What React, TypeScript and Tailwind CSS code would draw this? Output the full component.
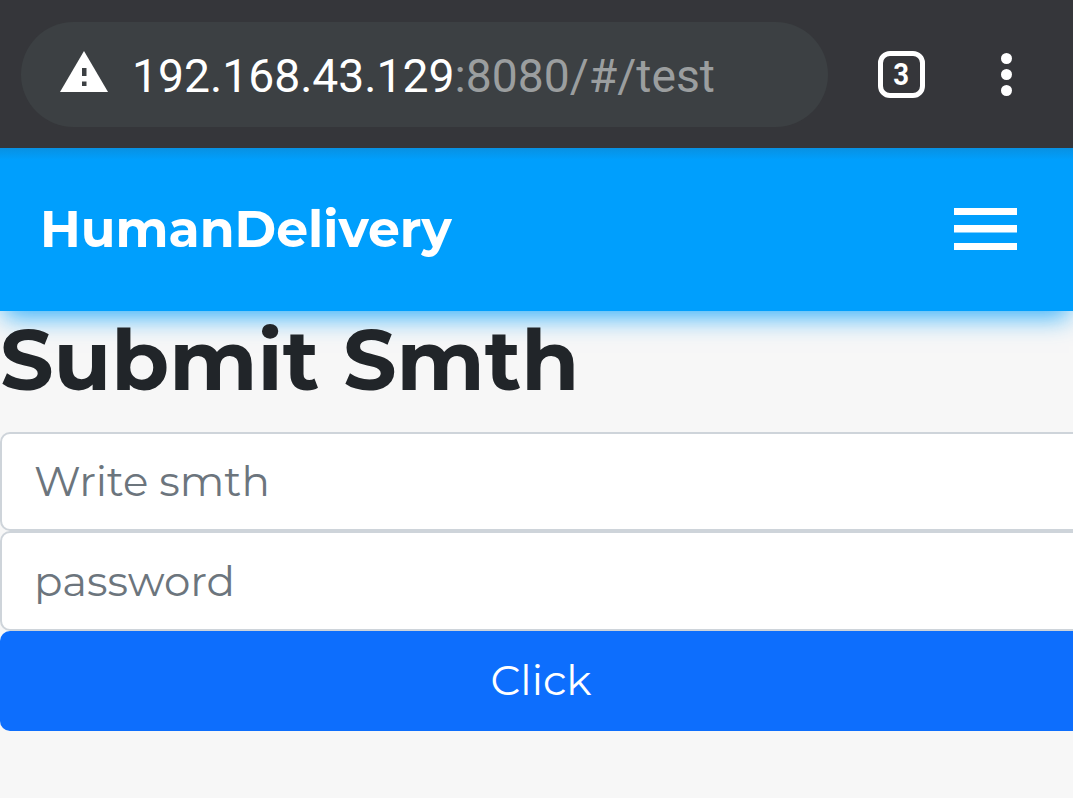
import React from 'react';

const fields = [
  { placeholder: "Write smth", type: "text", size: "h-[99px] pb-[2px]" },
  { placeholder: "password", type: "password", size: "h-[100px]" }
];

function WarningIcon() {
  return (
    <svg viewBox="0 0 48 41" className="ml-[39px] mb-[6px] h-[41px] w-12" fill="none">
      <path d="M24 0L48 41H0Z" fill="#fff" />
      <path d="M22 17H26.500V25H22ZM22 30.500H26.500V35H22Z" fill="#3c4043" />
    </svg>
  );
}

function BrowserBar() {
  return (
    <div className="relative z-10 flex h-[148px] items-start bg-[#35363a] pl-[21px] pt-[22px]">
      <div className="flex h-[105px] w-[807px] items-center rounded-full bg-[#3c4043]">
        <WarningIcon />
        <div
          className="ml-[24px] mt-[2px] whitespace-nowrap text-[46.25px] leading-[54px] text-[#9b9e9f]"
          style={{ fontFamily: "Roboto, sans-serif" }}
        >
          <span className="text-white">192.168.43.129</span>
          <span>:8080/#/test</span>
        </div>
      </div>

      {/* TAB COUNTER */}
      <div
        className="ml-[50px] mt-[29px] flex size-[47px] items-center justify-center rounded-[12px] border-[5px] border-white pb-[2px] text-[32px] font-bold leading-none text-white"
        style={{ fontFamily: "Roboto, sans-serif" }}
      >
        <span className="mr-px scale-x-[0.86]">3</span>
      </div>

      {/* MENU DOTS */}
      <div className="ml-[76px] mt-[31px] flex flex-col gap-[5px]">
        <div className="size-[11px] rounded-full bg-white" />
        <div className="size-[11px] rounded-full bg-white" />
        <div className="size-[11px] rounded-full bg-white" />
      </div>
    </div>
  );
}

function Navbar() {
  return (
    <nav className="flex h-[163px] items-center justify-between bg-[#009ffd] bg-linear-to-b from-[#0891e2] to-[#009ffd] to-[12px] pb-[2px] pl-[40px] pr-[56px] shadow-[0_10px_24px_-4px_#009ffdcc]">
      <span className="pt-[2px] text-[50.5px] font-bold leading-none text-white">HumanDelivery</span>
      <svg viewBox="0 0 63 42" className="h-[42px] w-[63px]" fill="#fff">
        <path d="M0 0H63V7H0ZM0 17H63V24.500H0ZM0 35H63V42H0Z" />
      </svg>
    </nav>
  );
}

export default function App() {
  return (
    <div
      className="h-[798px] w-full overflow-hidden bg-[#f7f7f7]"
      style={{ fontFamily: "Montserrat, Inter, sans-serif" }}
    >
      <BrowserBar />
      <Navbar />

      <form className="relative w-[1082px]" onSubmit={(e) => e.preventDefault()}>
        <h1 className="h-[121px] whitespace-nowrap text-[84px] font-bold leading-[98px] text-[#212529]">
          Submit Smth
        </h1>
        {fields.map((field) => (
          <input
            key={field.placeholder}
            type={field.type}
            placeholder={field.placeholder}
            className={`block w-full rounded-[10px] border-2 border-[#ced4da] bg-white px-[32px] text-[42px] placeholder:text-[#6c757d] ${field.size}`}
          />
        ))}
        <button className="block h-[100px] w-full rounded-[10px] bg-[#0d6efd] pb-[2px] text-[42px] text-white">
          Click
        </button>
      </form>
    </div>
  );
}
